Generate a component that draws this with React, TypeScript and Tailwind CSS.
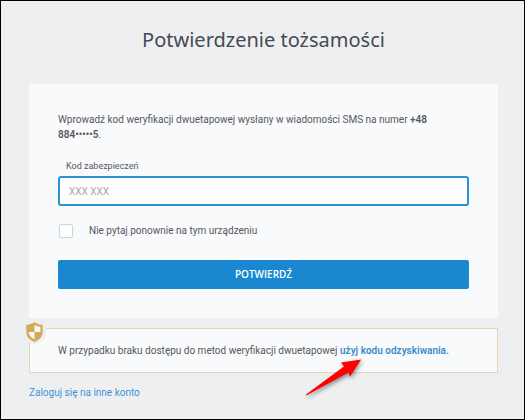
import { useState } from 'react';

function ShieldIcon() {
  return (
    <svg width="17" height="20" viewBox="0 0 17 20" aria-hidden="true">
      <path
        d="M8.500 0C6.300 1.800 3.400 2.700 0.300 2.900V10C0.300 14.700 3.600 18.200 8.500 20C13.400 18.200 16.700 14.700 16.700 10V2.900C13.600 2.700 10.700 1.800 8.500 0Z"
        fill="#d8a955"
      />
      <path d="M8.500 3.300V10H14.400V5C12.200 4.700 10.200 4.100 8.500 3.300Z" fill="#f8fafc" />
      <path d="M8.500 10V17.200C5 15.700 2.800 13.400 2.600 10Z" fill="#f8fafc" />
    </svg>
  );
}

function PointerArrow() {
  return (
    <svg
      width="62"
      height="44"
      viewBox="0 0 62 44"
      aria-hidden="true"
      className="pointer-events-none absolute top-full right-[131px] -mt-4 drop-shadow-[1px_2px_2px_rgba(0,0,0,0.45)]"
    >
      <path
        d="M2 38.400L40 10.400L37 6.500L57.200 3.500L46 20.500L44.500 16.500L2.800 39.300Q1.800 39.500 2 38.400Z"
        fill="#fe0000"
      />
    </svg>
  );
}

export default function App() {
  const [code, setCode] = useState('');
  const [remember, setRemember] = useState(false);

  return (
    <div className="min-h-screen border border-black bg-[#eeeff1] pr-[26px] pl-7 font-['Roboto','Open_Sans',sans-serif] text-[10px] leading-[15px] text-[#55585c]">
      <main>
        <h1 className="pt-6 pb-[29px] text-center font-['Noto_Sans','Open_Sans',sans-serif] text-[20px] leading-[30px] text-[#444b54]">
          Potwierdzenie tożsamości
        </h1>

        <form
          className="bg-[#f9fafc] px-[29px] pt-7 pb-[29px]"
          onSubmit={(e) => e.preventDefault()}
        >
          <p>
            Wprowadź kod weryfikacji dwuetapowej wysłany w wiadomości SMS na numer{' '}
            <strong className="font-semibold">+48 884•••••5</strong>.
          </p>

          <label htmlFor="code" className="mt-[17px] block px-2 text-[9px]">
            Kod zabezpieczeń
          </label>
          <input
            id="code"
            type="text"
            inputMode="numeric"
            autoComplete="one-time-code"
            placeholder="XXX XXX"
            value={code}
            onChange={(e) => setCode(e.target.value)}
            className="mt-0.5 block h-[30px] w-full rounded-[3px] border-2 border-[#2b92d6] bg-white px-[9px] outline-none placeholder:text-[#a9a9a9]"
          />

          <div className="mt-[17px] flex items-center gap-4">
            <input
              id="remember"
              type="checkbox"
              checked={remember}
              onChange={(e) => setRemember(e.target.checked)}
              className="ml-px size-3.5 appearance-none rounded-[2px] border border-[#c8d6dc] bg-white checked:bg-[#1a87d0]"
            />
            <label htmlFor="remember">Nie pytaj ponownie na tym urządzeniu</label>
          </div>

          <button
            type="submit"
            className="mt-[22px] block h-[29px] w-full rounded-[2px] bg-[#1a87d0] font-['Open_Sans','Noto_Sans',sans-serif] font-semibold text-white uppercase"
          >
            Potwierdź
          </button>
        </form>

        <section className="relative mt-2.5 border border-[#e8d5ad] bg-[#f9fafc] py-3.5 pr-2 pl-7">
          <span className="absolute -top-[9px] -left-2 flex size-6 items-center justify-center rounded-full bg-[#eeeff1]">
            <ShieldIcon />
          </span>
          <p>
            W przypadku braku dostępu do metod weryfikacji dwuetapowej{' '}
            <a href="#recovery" className="font-semibold text-[#3d8ccc]">
              użyj kodu odzyskiwania.
            </a>
          </p>
          <PointerArrow />
        </section>

        <a href="#login" className="mt-3 inline-block text-[#3d94d6]">
          Zaloguj się na inne konto
        </a>
      </main>
    </div>
  );
}
